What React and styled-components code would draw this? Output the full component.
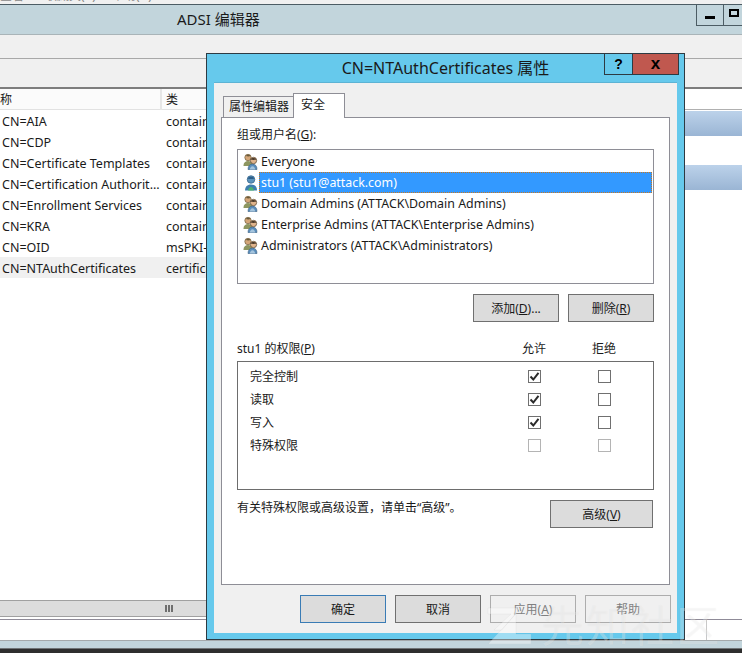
import styled, { createGlobalStyle } from "styled-components";

const uiFont = `"Noto Sans", "Noto Sans CJK SC", sans-serif`;

const GlobalStyle = createGlobalStyle`
  html, body {
    margin: 0;
    padding: 0;
    background: #fff;
  }
  * {
    box-sizing: border-box;
  }
`;

const Page = styled.div`
  position: relative;
  display: flex;
  flex-direction: column;
  width: 742px;
  height: 653px;
  overflow: hidden;
  font-family: ${uiFont};
  font-size: 12px;
  color: #1a1a1a;
  background: #fff;
`;

const MenuStrip = styled.div`
  display: flex;
  align-items: flex-end;
  gap: 16px;
  height: 4px;
  overflow: hidden;
  background: #f0f0f0;
  color: #888;
  line-height: 16px;
  white-space: nowrap;
`;

const MenuItem = styled.span`
  flex-shrink: 0;
  min-width: ${({ $min }) => $min || 0}px;
`;

const MainTitleBar = styled.div`
  display: flex;
  justify-content: space-between;
  height: 31px;
  padding-left: 177px;
  background: #c2d5dc;
  border-top: 1px solid #4c5c64;
  border-bottom: 1px solid #a9b4b8;
`;

const MainTitle = styled.div`
  font-size: 15px;
  line-height: 29px;
`;

const MainButtons = styled.div`
  display: flex;
  height: 21px;
  margin-right: -2px;
`;

const MainButton = styled.div`
  display: flex;
  align-items: center;
  justify-content: center;
  width: 28px;
  border: 1px solid #4c5c64;
  border-top: 0;
  margin-left: -1px;
  &:last-child {
    width: 21px;
  }
`;

const MinGlyph = styled.span`
  width: 10px;
  height: 3px;
  margin-top: 4px;
  background: #000;
`;

const MaxGlyph = styled.span`
  width: 10px;
  height: 8px;
  margin-top: -4px;
  border: 2px solid #000;
`;

const Toolbar = styled.div`
  height: 24px;
  background: #f0f0f0;
  border-bottom: 1px solid #a8a8a8;
`;

const SubToolbar = styled.div`
  height: 30px;
  background: #f0f0f0;
  border-bottom: 2px solid #7d7d7d;
`;

const Workspace = styled.div`
  display: flex;
  flex: 1;
  min-height: 0;
`;

const ListPane = styled.div`
  display: flex;
  flex-direction: column;
  flex: 1;
  min-width: 0;
`;

const ColumnHeader = styled.div`
  display: grid;
  grid-template-columns: 162px 1fr;
  height: 21px;
  background: #fbfbfb;
  border-bottom: 1px solid #e2e2e2;
`;

const HeaderCell = styled.div`
  padding-left: ${({ $inset }) => $inset}px;
  line-height: 22px;
  border-right: 2px solid #e6e6e6;
  &:last-child {
    border-right: 0;
  }
`;

const Rows = styled.div`
  flex: 1;
`;

const Row = styled.div`
  display: grid;
  grid-template-columns: 160px 1fr;
  height: 21px;
  font-size: 12.5px;
  line-height: 24px;
  background: ${({ $active }) => ($active ? "#f0f0f0" : "#fff")};
`;

const NameCell = styled.div`
  padding-left: 2px;
  white-space: nowrap;
  overflow: hidden;
`;

const ClassCell = styled.div`
  padding-left: 6px;
  white-space: nowrap;
  overflow: hidden;
`;

const ScrollTrack = styled.div`
  display: flex;
  align-items: center;
  justify-content: center;
  height: 17px;
  margin-bottom: 2px;
  padding-right: 325px;
  background: #dcdcdc;
  border-top: 1px solid #a0a0a0;
  border-bottom: 1px solid #a0a0a0;
`;

const Grip = styled.span`
  width: 8px;
  height: 7px;
  background: repeating-linear-gradient(90deg, #6f6f6f 0 2px, transparent 2px 3px);
`;

const ActionPane = styled.div`
  display: flex;
  flex-direction: column;
  width: 80px;
`;

const ActionHead = styled.div`
  height: 21px;
  border-bottom: 1px solid #b0b0b0;
`;

const ActionBand = styled.div`
  height: 25px;
  margin-top: ${({ $gap }) => $gap}px;
  background: linear-gradient(#bcd2ea, #9ab5d4);
`;

const StatusBar = styled.div`
  display: flex;
  justify-content: flex-end;
  height: 21px;
  background: #fff;
  border-top: 1px solid #8f8b98;
`;

const StatusCell = styled.div`
  width: 36px;
  border-left: 1px solid #c8c8c8;
`;

const FrameBottom = styled.div`
  height: 8px;
  background: #c2d5dc;
  border-top: 1px solid #a4a9ab;
`;

const Taskbar = styled.div`
  height: 5px;
  background: #2e2e2e;
  border-top: 1px solid #6f7476;
`;

const Dialog = styled.div`
  position: absolute;
  left: 206px;
  top: 53px;
  display: flex;
  flex-direction: column;
  width: 479px;
  height: 587px;
  padding: 0 7px 6px;
  background: #66c9ec;
  border: 1px solid #2d3a42;
`;

const DialogTitleBar = styled.div`
  position: relative;
  height: 28px;
  flex-shrink: 0;
  text-align: center;
  font-size: 16px;
  line-height: 29px;
`;

const DialogButtons = styled.div`
  position: absolute;
  top: 0;
  right: -2px;
  display: flex;
`;

const CaptionButton = styled.div`
  display: flex;
  align-items: center;
  justify-content: center;
  width: ${({ $wide }) => ($wide ? 47 : 29)}px;
  height: 21px;
  margin-left: -1px;
  padding-bottom: ${({ $wide }) => ($wide ? 2 : 0)}px;
  background: ${({ $wide }) => ($wide ? "#c0584f" : "transparent")};
  border: 1px solid #2d3a42;
  border-top: 0;
  color: #000;
  font-family: "Liberation Sans", sans-serif;
  font-size: ${({ $wide }) => ($wide ? 17 : 14)}px;
  font-weight: 700;
  line-height: 1;
`;

const Client = styled.div`
  display: flex;
  flex-direction: column;
  flex: 1;
  padding: 10px 7px 0;
  background: #f0f0f0;
  border-top: 1px solid #5cb3d4;
`;

const Tabs = styled.div`
  display: flex;
  align-items: flex-end;
  height: 24px;
  padding-left: 2px;
`;

const Tab = styled.div`
  position: relative;
  z-index: ${({ $active }) => ($active ? 1 : 0)};
  width: ${({ $active }) => ($active ? 52 : 70)}px;
  height: ${({ $active }) => ($active ? 25 : 21)}px;
  margin-bottom: ${({ $active }) => ($active ? -1 : 0)}px;
  padding-left: ${({ $active }) => ($active ? 7 : 5)}px;
  background: ${({ $active }) => ($active ? "#fff" : "#f0f0f0")};
  border: 1px solid #8e8e96;
  border-bottom: 0;
  border-right-width: ${({ $active }) => ($active ? 1 : 0)}px;
  line-height: ${({ $active }) => ($active ? 22 : 20)}px;
`;

const TabPanel = styled.div`
  display: flex;
  flex-direction: column;
  height: 468px;
  padding: 7px 15px 0;
  background: #fff;
  border: 1px solid #8e8e96;
`;

const FieldLabel = styled.div`
  height: 24px;
  line-height: 20px;
`;

const UserList = styled.div`
  height: 135px;
  padding: 1px;
  border: 1px solid #8e8e96;
`;

const UserRow = styled.div`
  display: flex;
  align-items: center;
  height: 21px;
  padding-left: 4px;

  svg {
    flex-shrink: 0;
  }
`;

const UserName = styled.span`
  flex: 1;
  height: 21px;
  padding-left: 2px;
  font-size: 12.4px;
  line-height: 22px;
  white-space: nowrap;
  background: ${({ $selected }) => ($selected ? "#3399ff" : "transparent")};
  color: ${({ $selected }) => ($selected ? "#fff" : "#1a1a1a")};
  outline: ${({ $selected }) => ($selected ? "1px dotted #c9781f" : "none")};
  outline-offset: -1px;
`;

const ButtonRow = styled.div`
  display: flex;
  justify-content: flex-end;
  gap: 9px;
  margin-top: 10px;
`;

const Button = styled.div`
  display: flex;
  align-items: center;
  justify-content: center;
  flex-shrink: 0;
  width: ${({ $width }) => $width || 86}px;
  height: 28px;
  background: ${({ $disabled }) => ($disabled ? "transparent" : "#dcdcdc")};
  border: 1px solid ${({ $disabled, $primary }) =>
    $disabled ? "#adadad" : $primary ? "#3a7cb5" : "#707070"};
  color: ${({ $disabled }) => ($disabled ? "#808080" : "#1a1a1a")};
`;

const PermHeader = styled.div`
  display: grid;
  grid-template-columns: 1fr 70px 70px;
  margin-top: 17px;
  padding-right: 15px;
  height: 22px;
  line-height: 20px;
`;

const PermBox = styled.div`
  height: 129px;
  padding: 3px 14px 0 12px;
  border: 1px solid #6d6d6d;
`;

const PermRow = styled.div`
  display: grid;
  grid-template-columns: 1fr 70px 70px;
  align-items: center;
  height: 23px;
`;

const PermName = styled.span`
  padding-bottom: 2px;
`;

const CheckCell = styled.div`
  display: flex;
  justify-content: center;
`;

const CheckBox = styled.span`
  display: flex;
  align-items: center;
  justify-content: center;
  width: 13px;
  height: 13px;
  background: #fff;
  border: 1px solid ${({ $disabled }) => ($disabled ? "#b4b4b4" : "#707070")};
`;

const Centered = styled.div`
  text-align: center;
`;

const InfoRow = styled.div`
  display: flex;
  justify-content: space-between;
  margin-top: 10px;
  margin-right: 1px;
`;

const InfoText = styled.div`
  line-height: 16px;
`;

const DialogActions = styled.div`
  display: flex;
  justify-content: flex-end;
  gap: 9px;
  margin-top: 10px;
  margin-right: -1px;
`;

const Watermark = styled.div`
  position: absolute;
  left: 487px;
  top: 598px;
  display: flex;
  align-items: center;
  gap: 10px;
  pointer-events: none;
`;

const WatermarkText = styled.span`
  font-family: "Noto Sans CJK SC", sans-serif;
  font-size: 43px;
  line-height: 50px;
  letter-spacing: 2px;
  color: rgba(255, 255, 255, 0.3);
  text-shadow: 0 0 1px rgba(0, 0, 0, 0.05);
`;

const rows = [
  ["CN=AIA", "container"],
  ["CN=CDP", "container"],
  ["CN=Certificate Templates", "container"],
  ["CN=Certification Authorit...", "container"],
  ["CN=Enrollment Services", "container"],
  ["CN=KRA", "container"],
  ["CN=OID", "msPKI-Enterprise-Oid"],
  ["CN=NTAuthCertificates", "certificationAuthority"],
];

const users = [
  { name: "Everyone", group: true },
  { name: "stu1 (stu1@attack.com)", group: false, selected: true },
  { name: "Domain Admins (ATTACK\\Domain Admins)", group: true },
  { name: "Enterprise Admins (ATTACK\\Enterprise Admins)", group: true },
  { name: "Administrators (ATTACK\\Administrators)", group: true },
];

const permissions = [
  { name: "完全控制", allow: true },
  { name: "读取", allow: true },
  { name: "写入", allow: true },
  { name: "特殊权限", disabled: true },
];

function GroupIcon() {
  return (
    <svg width="16" height="17" viewBox="0 0 16 17">
      <path d="M0.500 12.500c0-3 2-4.500 4.500-4.500s4.500 1.500 4.500 4.500v.5h-9z" fill="#8d9660" />
      <circle cx="5" cy="4.500" r="3.200" fill="#d4a678" stroke="#6f6040" strokeWidth=".7" />
      <path d="M3 3c.6-1.800 3.600-1.800 4.500 0-1.500.5-3 .5-4.500 0z" fill="#6a5a3a" />
      <path d="M5 16.500c0-3.500 1.800-5.500 4.500-5.500s4.500 2 4.500 5.500z" fill="#5a8dbb" stroke="#3a5f82" strokeWidth=".6" />
      <path d="M6.800 16.500c.3-2 1.300-3.300 2.700-3.300s2.400 1.300 2.700 3.300z" fill="#a4c4dd" />
      <circle cx="10.500" cy="7.500" r="3.200" fill="#e0b48c" stroke="#55442e" strokeWidth=".7" />
      <path d="M7.500 6.500c.6-2 5-2.300 6 0-2 .5-4 .5-6 0z" fill="#4a3a2a" />
    </svg>
  );
}

function UserIcon() {
  return (
    <svg width="16" height="17" viewBox="0 0 16 17">
      <path d="M2 16.500c0-3.800 2.300-6 6-6s6 2.200 6 6z" fill="#3f7fae" />
      <path d="M5 16.500c.5-2.300 1.600-3.600 3-3.600s2.500 1.300 3 3.600z" fill="#4fb36d" />
      <circle cx="8" cy="5.500" r="3.800" fill="#5c93bc" stroke="#2f5f85" strokeWidth=".7" />
      <path d="M4.600 4.500c1-2.500 6-2.500 6.800 0-2 .7-4.800 .7-6.800 0z" fill="#2d5f8a" />
    </svg>
  );
}

function CheckMark() {
  return (
    <svg width="11" height="11" viewBox="0 0 11 11">
      <path d="M1.500 5.500l2.800 3L9.500 1.800" fill="none" stroke="#2b2b2b" strokeWidth="2" />
    </svg>
  );
}

function WatermarkLogo() {
  return (
    <svg width="44" height="42" viewBox="0 0 44 42">
      <path
        d="M1 6h32L15 28H7L24 12H1z M1 42L29 12v20h15v10z"
        fill="rgba(255,255,255,0.38)"
        stroke="rgba(0,0,0,0.03)"
      />
    </svg>
  );
}

export default function App() {
  return (
    <>
      <GlobalStyle />
      <Page>
        <MenuStrip>
          <MenuItem $min={29}>查看</MenuItem>
          <MenuItem>收藏夹(A)</MenuItem>
          <MenuItem>帮助(H)</MenuItem>
        </MenuStrip>
        <MainTitleBar>
          <MainTitle>ADSI 编辑器</MainTitle>
          <MainButtons>
            <MainButton>
              <MinGlyph />
            </MainButton>
            <MainButton>
              <MaxGlyph />
            </MainButton>
          </MainButtons>
        </MainTitleBar>
        <Toolbar />
        <SubToolbar />
        <Workspace>
          <ListPane>
            <ColumnHeader>
              <HeaderCell $inset={0}>称</HeaderCell>
              <HeaderCell $inset={4}>类</HeaderCell>
            </ColumnHeader>
            <Rows>
              {rows.map(([name, type], i) => (
                <Row key={name} $active={i === rows.length - 1}>
                  <NameCell>{name}</NameCell>
                  <ClassCell>{type}</ClassCell>
                </Row>
              ))}
            </Rows>
            <ScrollTrack>
              <Grip />
            </ScrollTrack>
          </ListPane>
          <ActionPane>
            <ActionHead />
            <ActionBand $gap={1} />
            <ActionBand $gap={29} />
          </ActionPane>
        </Workspace>
        <StatusBar>
          <StatusCell />
        </StatusBar>
        <FrameBottom />
        <Taskbar />

        <Dialog>
          <DialogTitleBar>
            CN=NTAuthCertificates 属性
            <DialogButtons>
              <CaptionButton>?</CaptionButton>
              <CaptionButton $wide>x</CaptionButton>
            </DialogButtons>
          </DialogTitleBar>
          <Client>
            <Tabs>
              <Tab>属性编辑器</Tab>
              <Tab $active>安全</Tab>
            </Tabs>
            <TabPanel>
              <FieldLabel>
                组或用户名(<u>G</u>):
              </FieldLabel>
              <UserList>
                {users.map((user) => (
                  <UserRow key={user.name}>
                    {user.group ? <GroupIcon /> : <UserIcon />}
                    <UserName $selected={user.selected}>{user.name}</UserName>
                  </UserRow>
                ))}
              </UserList>
              <ButtonRow>
                <Button>
                  添加(<u>D</u>)...
                </Button>
                <Button>
                  删除(<u>R</u>)
                </Button>
              </ButtonRow>
              <PermHeader>
                <div>
                  stu1 的权限(<u>P</u>)
                </div>
                <Centered>允许</Centered>
                <Centered>拒绝</Centered>
              </PermHeader>
              <PermBox>
                {permissions.map((perm) => (
                  <PermRow key={perm.name}>
                    <PermName>{perm.name}</PermName>
                    <CheckCell>
                      <CheckBox $disabled={perm.disabled}>{perm.allow && <CheckMark />}</CheckBox>
                    </CheckCell>
                    <CheckCell>
                      <CheckBox $disabled={perm.disabled} />
                    </CheckCell>
                  </PermRow>
                ))}
              </PermBox>
              <InfoRow>
                <InfoText>有关特殊权限或高级设置，请单击“高级”。</InfoText>
                <Button $width={103}>
                  高级(<u>V</u>)
                </Button>
              </InfoRow>
            </TabPanel>
            <DialogActions>
              <Button $primary>确定</Button>
              <Button>取消</Button>
              <Button $disabled>
                应用(<u>A</u>)
              </Button>
              <Button $disabled>帮助</Button>
            </DialogActions>
          </Client>
        </Dialog>

        <Watermark>
          <WatermarkLogo />
          <WatermarkText>先知社区</WatermarkText>
        </Watermark>
      </Page>
    </>
  );
}
